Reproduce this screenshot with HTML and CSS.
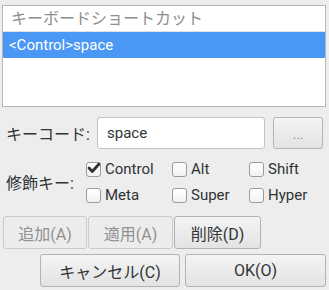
FILE: index.html
```html
<!DOCTYPE html>
<html lang="ja">
<head>
<meta charset="utf-8">
<link rel="stylesheet" href="styles.css">
</head>
<body>
<div class="dialog">
  <div class="list">
    <div class="list-head">キーボードショートカット</div>
    <div class="list-row selected">&lt;Control&gt;space</div>
  </div>

  <div class="keyrow">
    <div class="label keylabel">キーコード:</div>
    <div class="entry">space</div>
    <div class="btn dots">...</div>
  </div>

  <div class="modrow">
    <div class="label modlabel">修飾キー:</div>
    <div class="mods">
      <div class="check"><span class="box checked"><svg width="14" height="12" viewBox="0 0 14 12"><path d="M2 6 L5.3 9.5 L12 2" fill="none" stroke="#2e3436" stroke-width="2.8" stroke-linecap="round" stroke-linejoin="round"/></svg></span>Control</div>
      <div class="check"><span class="box"></span>Alt</div>
      <div class="check"><span class="box"></span>Shift</div>
      <div class="check"><span class="box"></span>Meta</div>
      <div class="check"><span class="box"></span>Super</div>
      <div class="check"><span class="box"></span>Hyper</div>
    </div>
  </div>

  <div class="actions">
    <div class="btn disabled w-add">追加(A)</div>
    <div class="btn disabled w-apply">適用(A)</div>
    <div class="btn w-del">削除(D)</div>
  </div>

  <div class="footer">
    <div class="btn w-cancel">キャンセル(C)</div>
    <div class="btn w-ok">OK(O)</div>
  </div>
</div>
</body>
</html>
```

FILE: styles.css
```css
html, body {
  margin: 0;
  padding: 0;
  background: #ededed;
}
body {
  width: 329px;
  height: 290px;
  overflow: hidden;
  font-family: Roboto, "Noto Sans CJK JP", sans-serif;
  font-size: 15px;
  color: #2e3436;
}
.dialog {
  display: flex;
  flex-direction: column;
  padding-top: 5px;
}
.list {
  margin-left: 2px;
  width: 322px;
  height: 100px;
  border: 1px solid #b6b6b6;
  background: #ffffff;
}
.list-head {
  height: 25px;
  line-height: 25px;
  padding-left: 8px;
  color: #8e8e8e;
  border-bottom: 1px solid #e2e2e2;
  font-size: 16px;
}
.list-row {
  height: 26px;
  line-height: 26px;
  padding-left: 6px;
}
.list-row.selected {
  background: #4a98f4;
  color: #ffffff;
  font-size: 15px;
}
.keyrow {
  display: flex;
  align-items: center;
  margin-top: 10px;
  padding-left: 6px;
  height: 32px;
}
.label {
  font-size: 16px;
}
.keylabel {
  width: 91px;
}
.entry {
  box-sizing: border-box;
  width: 168px;
  height: 32px;
  border: 1px solid #c2c2c2;
  border-radius: 3px;
  background: #ffffff;
  line-height: 30px;
  padding-left: 9px;
  font-size: 15px;
}
.btn {
  box-sizing: border-box;
  height: 33px;
  border: 1px solid #b3b3b3;
  border-radius: 3px;
  background: linear-gradient(#f4f4f4, #e3e3e3);
  display: flex;
  align-items: center;
  justify-content: center;
  font-size: 16px;
  color: #2e3436;
}
.btn.dots {
  margin-left: 8px;
  width: 50px;
  height: 32px;
  color: #7f8c9a;
  font-size: 13px;
  padding-top: 2px;
}
.btn.disabled {
  background: #ececec;
  border-color: #cbcbcb;
  color: #8f9192;
}
.modrow {
  display: flex;
  align-items: center;
  margin-top: 7px;
  padding-left: 6px;
}
.modlabel {
  width: 80px;
}
.mods {
  display: grid;
  grid-template-columns: 86px 77px 70px;
  grid-auto-rows: 26px;
}
.check {
  display: flex;
  align-items: center;
  gap: 4px;
}
.box {
  box-sizing: border-box;
  width: 15px;
  height: 15px;
  border: 1px solid #9c9c9c;
  border-radius: 3px;
  background: linear-gradient(#ffffff, #f2f2f2);
  display: flex;
  align-items: center;
  justify-content: center;
}
.box.checked svg {
  margin-top: -2px;
  flex: none;
}
.actions {
  display: flex;
  gap: 1px;
  margin-top: 8px;
  padding-left: 3px;
}
.w-add { width: 84px; }
.w-apply { width: 85px; }
.w-del { width: 87px; }
.footer {
  display: flex;
  gap: 5px;
  margin-top: 5px;
  padding-left: 40px;
}
.w-cancel { width: 140px; }
.w-ok { width: 141px; }
```
